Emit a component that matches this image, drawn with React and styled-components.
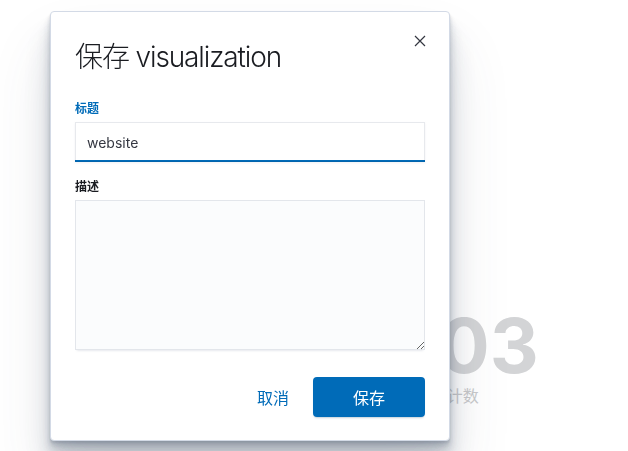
import React from "react";
import styled, { createGlobalStyle } from "styled-components";

const Global = createGlobalStyle`
  html, body { margin: 0; padding: 0; background: #fff; }
  body {
    font-family: Inter, "Noto Sans CJK SC", "Noto Sans", sans-serif;
    -webkit-font-smoothing: antialiased;
  }
  * { box-sizing: border-box; }
`;

const Page = styled.div`
  width: 628px;
  height: 451px;
  overflow: hidden;
  display: flex;
  align-items: flex-start;
  padding: 304px 0 0 387px;
`;

const Metric = styled.div`
  display: flex;
  flex-direction: column;
  align-items: center;
`;

const MetricValue = styled.div`
  font-family: Inter, sans-serif;
  font-weight: 700;
  font-size: 76px;
  line-height: 82px;
  color: #d3d4d6;
`;

const MetricLabel = styled.div`
  font-family: Inter, "Noto Sans CJK SC", sans-serif;
  font-size: 16px;
  line-height: 20px;
  color: #c8c9cb;
`;

const Overlay = styled.div`
  position: fixed;
  inset: 0;
  display: flex;
  align-items: flex-start;
  padding: 11px 0 0 50px;
`;

const Modal = styled.div`
  position: relative;
  width: 400px;
  height: 430px;
  background: #fff;
  border: 1px solid #d3dae6;
  border-radius: 4px;
  box-shadow:
    0 40px 64px 0 rgba(65, 78, 101, 0.12),
    0 24px 32px 0 rgba(65, 78, 101, 0.14),
    0 16px 16px 0 rgba(65, 78, 101, 0.16),
    0 8px 8px 0 rgba(65, 78, 101, 0.16),
    0 4px 4px 0 rgba(65, 78, 101, 0.14),
    0 2px 2px 0 rgba(65, 78, 101, 0.12);
  display: flex;
  flex-direction: column;
  padding: 24px 24px 23px;
`;

const CloseButton = styled.button`
  position: absolute;
  top: 21px;
  right: 21px;
  width: 16px;
  height: 16px;
  padding: 0;
  border: none;
  background: none;
  display: flex;
  align-items: center;
  justify-content: center;
  cursor: pointer;
`;

const Title = styled.h1`
  margin: 0;
  font-family: Inter, "Noto Sans CJK SC", sans-serif;
  font-weight: 300;
  font-size: 28px;
  line-height: 40px;
  letter-spacing: -0.04em;
  color: #1a1c21;
  padding-top: 1px;
`;

const Form = styled.div`
  display: flex;
  flex-direction: column;
  margin-top: 23px;
  gap: 16px;
`;

const Row = styled.div`
  display: flex;
  flex-direction: column;
  gap: 4px;
`;

const Label = styled.label`
  font-family: Inter, "Noto Sans CJK SC", sans-serif;
  font-size: 12px;
  line-height: 18px;
  font-weight: 700;
  color: ${(p) => (p.$active ? "#006bb8" : "#1a1c21")};
`;

const TextInput = styled.input`
  width: 350px;
  height: 40px;
  padding: 0 12px;
  border: none;
  outline: none;
  font-family: Inter, sans-serif;
  font-size: 14px;
  color: #343741;
  background-color: #fff;
  box-shadow: 0 1px 2px rgba(152, 162, 179, 0.15), inset 0 0 0 1px rgba(15, 37, 80, 0.1);
  background-image: linear-gradient(to top, #006bb8, #006bb8 2px, transparent 2px, transparent 100%);
  background-size: 100% 100%;
  background-repeat: no-repeat;
`;

const TextArea = styled.textarea`
  display: block;
  width: 350px;
  height: 150px;
  padding: 12px;
  border: none;
  outline: none;
  resize: vertical;
  font-family: Inter, sans-serif;
  font-size: 14px;
  color: #343741;
  background: #fbfcfd;
  box-shadow: 0 1px 1px -1px rgba(152, 162, 179, 0.2), 0 3px 2px -2px rgba(152, 162, 179, 0.2),
    inset 0 0 0 1px rgba(15, 37, 80, 0.1);
`;

const Footer = styled.div`
  margin-top: auto;
  display: flex;
  justify-content: flex-end;
  align-items: center;
  gap: 12px;
`;

const EmptyButton = styled.button`
  height: 40px;
  padding: 0 12px;
  border: none;
  background: none;
  font-family: Inter, "Noto Sans CJK SC", sans-serif;
  font-size: 16px;
  color: #006bb8;
  cursor: pointer;
`;

const PrimaryButton = styled.button`
  width: 112px;
  height: 40px;
  border: none;
  border-radius: 4px;
  background: #006bb8;
  color: #fff;
  font-family: Inter, "Noto Sans CJK SC", sans-serif;
  font-size: 16px;
  box-shadow: 0 2px 2px -1px rgba(54, 97, 126, 0.3);
  cursor: pointer;
`;

export default function App() {
  return (
    <>
      <Global />
      <Page>
        <Metric>
          <MetricValue>403</MetricValue>
          <MetricLabel>计数</MetricLabel>
        </Metric>
      </Page>
      <Overlay>
        <Modal>
          <CloseButton aria-label="close">
            <svg width="16" height="16" viewBox="0 0 16 16">
              <path d="M3 3 L13 13 M13 3 L3 13" stroke="#343741" strokeWidth="1.2" fill="none" />
            </svg>
          </CloseButton>
          <Title>保存 visualization</Title>
          <Form>
            <Row>
              <Label $active>标题</Label>
              <TextInput defaultValue="website" />
            </Row>
            <Row>
              <Label>描述</Label>
              <TextArea />
            </Row>
          </Form>
          <Footer>
            <EmptyButton>取消</EmptyButton>
            <PrimaryButton>保存</PrimaryButton>
          </Footer>
        </Modal>
      </Overlay>
    </>
  );
}
